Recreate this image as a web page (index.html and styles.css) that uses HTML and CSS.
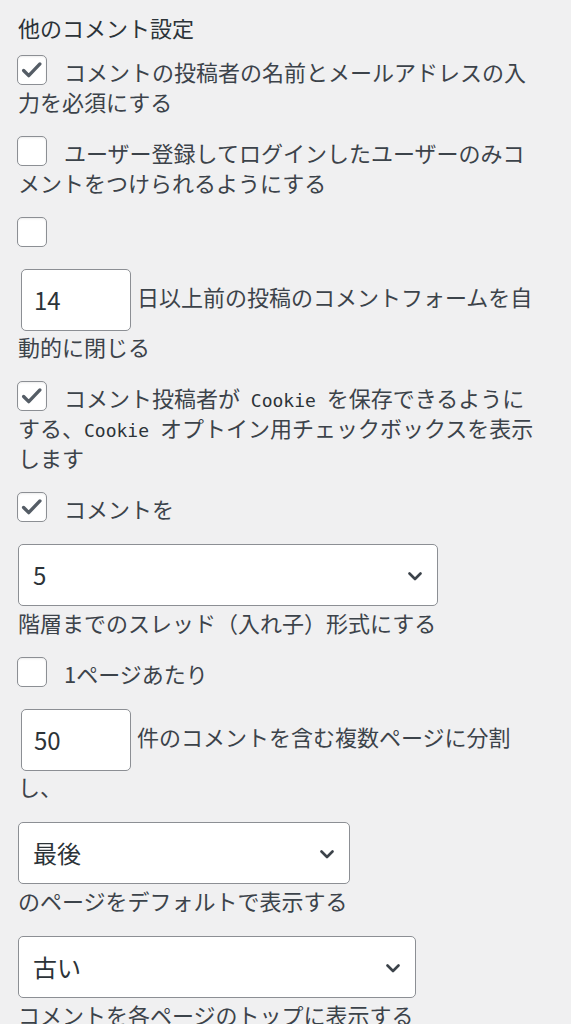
FILE: index.html
```html
<!DOCTYPE html>
<html lang="ja">
<head>
  <meta charset="UTF-8">
  <title>ディスカッション設定</title>
  <link rel="stylesheet" href="styles.css">
</head>
<body>
  <div class="settings">
    <h2 class="title">他のコメント設定</h2>

    <div class="item">
      <span class="box"><svg viewBox="0 0 30 30"><path d="M6 15.5 L11.5 21 L23.5 8.5"/></svg></span>コメントの投稿者の名前とメールアドレスの入力を必須にする
    </div>

    <div class="item">
      <span class="box"></span>ユーザー登録してログインしたユーザーのみコメントをつけられるようにする
    </div>

    <div class="item">
      <span class="box"></span>
    </div>

    <div class="item">
      <span class="num">14</span>日以上前の投稿のコメントフォームを自動的に閉じる
    </div>

    <div class="item">
      <span class="box"><svg viewBox="0 0 30 30"><path d="M6 15.5 L11.5 21 L23.5 8.5"/></svg></span>コメント投稿者が<span class="mono"> Cookie </span>を保存できるようにする、<span class="mono">Cookie </span>オプトイン用チェックボックスを表示します
    </div>

    <div class="item">
      <span class="box"><svg viewBox="0 0 30 30"><path d="M6 15.5 L11.5 21 L23.5 8.5"/></svg></span>コメントを
    </div>

    <div class="item">
      <div class="select w-depth">
        <span>5</span>
        <svg viewBox="0 0 14 9"><path d="M1.5 1.5 L7 7 L12.5 1.5"/></svg>
      </div>
      <div class="after">階層までのスレッド（入れ子）形式にする</div>
    </div>

    <div class="item">
      <span class="box"></span>1ページあたり
    </div>

    <div class="item">
      <span class="num">50</span>件のコメントを含む複数ページに分割し、
    </div>

    <div class="item">
      <div class="select w-page">
        <span>最後</span>
        <svg viewBox="0 0 14 9"><path d="M1.5 1.5 L7 7 L12.5 1.5"/></svg>
      </div>
      <div class="after">のページをデフォルトで表示する</div>
    </div>

    <div class="item">
      <div class="select w-order">
        <span>古い</span>
        <svg viewBox="0 0 14 9"><path d="M1.5 1.5 L7 7 L12.5 1.5"/></svg>
      </div>
      <div class="after">コメントを各ページのトップに表示する</div>
    </div>
  </div>
</body>
</html>
```

FILE: styles.css
```css
body {
  margin: 0;
  background: #f0f0f1;
  color: #3c434a;
  font-family: "Noto Sans CJK JP", "Noto Sans", sans-serif;
  font-size: 22px;
  line-height: 30px;
}
.settings {
  padding: 12px 28px 0 18px;
}
.title {
  margin: 0;
  font-size: 22px;
  font-weight: 400;
  line-height: 30px;
  color: #2c3338;
}
.item {
  margin-top: 21px;
}
.title + .item {
  margin-top: 14px;
}
.box {
  display: inline-block;
  box-sizing: border-box;
  width: 30px;
  height: 30px;
  margin: -1px 17px 0 -1px;
  vertical-align: top;
  background: #fff;
  border: 1px solid #8c8f94;
  border-radius: 5px;
  box-shadow: inset 0 1px 2px rgba(0,0,0,0.08);
}
.box svg {
  display: block;
  width: 28px;
  height: 28px;
}
.box path {
  fill: none;
  stroke: #555d66;
  stroke-width: 3.6;
  stroke-linecap: round;
  stroke-linejoin: round;
}
.mono {
  font-family: "DejaVu Sans Mono", monospace;
  font-size: 18px;
  line-height: 1;
  color: #2c3338;
}
.num {
  display: inline-block;
  box-sizing: border-box;
  width: 110px;
  height: 62px;
  margin: 0 6px 0 3px;
  padding: 0 12px;
  vertical-align: middle;
  background: #fff;
  border: 1px solid #8c8f94;
  border-radius: 5px;
  color: #2c3338;
  font-size: 24px;
  line-height: 60px;
}
.select {
  display: flex;
  align-items: center;
  justify-content: space-between;
  box-sizing: border-box;
  height: 62px;
  padding: 0 15px 0 14px;
  background: #fff;
  border: 1px solid #8c8f94;
  border-radius: 5px;
  color: #2c3338;
  font-size: 24px;
}
.select svg {
  width: 14px;
  height: 9px;
  margin-top: 3px;
}
.select path {
  fill: none;
  stroke: #3c434a;
  stroke-width: 2.6;
  stroke-linecap: round;
  stroke-linejoin: round;
}
.w-depth { width: 420px; }
.w-page { width: 332px; }
.w-order { width: 398px; }
.after {
  margin-top: 1px;
}
```
